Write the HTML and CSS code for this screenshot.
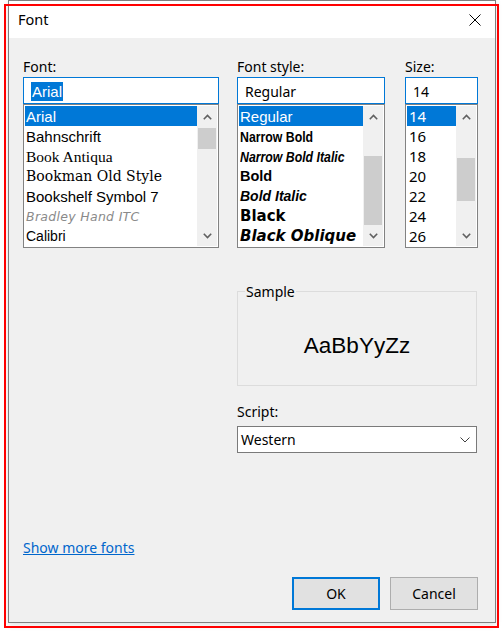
FILE: index.html
```html
<!DOCTYPE html>
<html>
<head>
<meta charset="utf-8">
<link rel="stylesheet" href="styles.css">
</head>
<body>
<div class="window">
  <div class="titlebar">
    <span class="title">Font</span>
    <svg class="close" width="12" height="12" viewBox="0 0 12 12"><path d="M0.5 0.5 L11.5 11.5 M11.5 0.5 L0.5 11.5" stroke="#000" stroke-width="1" fill="none"/></svg>
  </div>
  <div class="content">
    <div class="pickers">
      <div class="label">Font:</div>
      <div class="label">Font style:</div>
      <div class="label c3">Size:</div>

      <div class="input focused"><span class="selected-text">Arial</span></div>
      <div class="input focused"><span class="plain-text">Regular</span></div>
      <div class="input focused c3"><span class="plain-text">14</span></div>

      <div class="list">
        <div class="items">
          <div class="item sel f-arial">Arial</div>
          <div class="item f-arial">Bahnschrift</div>
          <div class="item f-antiqua">Book Antiqua</div>
          <div class="item f-bookman">Bookman Old Style</div>
          <div class="item f-arial">Bookshelf Symbol 7</div>
          <div class="item f-bradley">Bradley Hand ITC</div>
          <div class="item f-calibri">Calibri</div>
        </div>
        <div class="scrollbar">
          <div class="arrow"><svg width="9" height="6" viewBox="0 0 9 6"><path d="M0.8 5.2 L4.5 1.5 L8.2 5.2" stroke="#606060" stroke-width="1.6" fill="none"/></svg></div>
          <div class="track"><div class="thumb thumb-font"></div></div>
          <div class="arrow"><svg width="9" height="6" viewBox="0 0 9 6"><path d="M0.8 0.8 L4.5 4.5 L8.2 0.8" stroke="#606060" stroke-width="1.6" fill="none"/></svg></div>
        </div>
      </div>

      <div class="list">
        <div class="items">
          <div class="item sel f-arial">Regular</div>
          <div class="item f-narrow-b"><span class="narrow">Narrow Bold</span></div>
          <div class="item f-narrow-bi"><span class="narrow">Narrow Bold Italic</span></div>
          <div class="item f-bold">Bold</div>
          <div class="item f-bold-i">Bold Italic</div>
          <div class="item f-black">Black</div>
          <div class="item f-black-o">Black Oblique</div>
        </div>
        <div class="scrollbar">
          <div class="arrow"><svg width="9" height="6" viewBox="0 0 9 6"><path d="M0.8 5.2 L4.5 1.5 L8.2 5.2" stroke="#606060" stroke-width="1.6" fill="none"/></svg></div>
          <div class="track"><div class="thumb thumb-style"></div></div>
          <div class="arrow"><svg width="9" height="6" viewBox="0 0 9 6"><path d="M0.8 0.8 L4.5 4.5 L8.2 0.8" stroke="#606060" stroke-width="1.6" fill="none"/></svg></div>
        </div>
      </div>

      <div class="list c3">
        <div class="items">
          <div class="item sel f-ui">14</div>
          <div class="item f-ui">16</div>
          <div class="item f-ui">18</div>
          <div class="item f-ui">20</div>
          <div class="item f-ui">22</div>
          <div class="item f-ui">24</div>
          <div class="item f-ui">26</div>
        </div>
        <div class="scrollbar">
          <div class="arrow"><svg width="9" height="6" viewBox="0 0 9 6"><path d="M0.8 5.2 L4.5 1.5 L8.2 5.2" stroke="#606060" stroke-width="1.6" fill="none"/></svg></div>
          <div class="track"><div class="thumb thumb-size"></div></div>
          <div class="arrow"><svg width="9" height="6" viewBox="0 0 9 6"><path d="M0.8 0.8 L4.5 4.5 L8.2 0.8" stroke="#606060" stroke-width="1.6" fill="none"/></svg></div>
        </div>
      </div>

      <fieldset class="sample">
        <legend>Sample</legend>
        <div class="sample-text">AaBbYyZz</div>
      </fieldset>

      <div class="script-label label">Script:</div>
      <div class="select">
        <span>Western</span>
        <svg width="10" height="6" viewBox="0 0 10 6"><path d="M0.5 0.5 L5 5 L9.5 0.5" stroke="#404040" stroke-width="1" fill="none"/></svg>
      </div>
    </div>

    <div class="footer">
      <a class="more" href="#">Show more fonts</a>
      <div class="buttons">
        <button class="btn default">OK</button>
        <button class="btn">Cancel</button>
      </div>
    </div>
  </div>
</div>
<div class="redbox"></div>
</body>
</html>
```

FILE: styles.css
```css
html, body {
  margin: 0;
  padding: 0;
  background: #ffffff;
}
body {
  position: relative;
  width: 504px;
  height: 632px;
  overflow: hidden;
  font-family: "Noto Sans", "DejaVu Sans", sans-serif;
  font-size: 14px;
  color: #000;
}
.window {
  margin-left: 8px;
  width: 488px;
  height: 623px;
  box-sizing: border-box;
  border: 1px solid #7f7f7f;
  background: #f0f0f0;
  display: flex;
  flex-direction: column;
  box-shadow: 0 2px 6px rgba(0,0,0,0.12);
}
.titlebar {
  height: 37px;
  background: #ffffff;
  display: flex;
  align-items: center;
  justify-content: space-between;
  padding: 0 14px 0 9px;
  flex: none;
}
.title {
  font-size: 14.5px;
  line-height: 37px;
}
.close {
  display: block;
}
.content {
  flex: 1;
  display: flex;
  flex-direction: column;
  padding: 19px 17px 12px 14px;
}
.pickers {
  display: grid;
  grid-template-columns: 196px 148px 75px;
  column-gap: 18px;
}
.c3 {
  margin-left: 2px;
}
.label {
  line-height: 20px;
  height: 20px;
}
.input {
  height: 27px;
  box-sizing: border-box;
  background: #fff;
  border: 1px solid #7a7a7a;
  display: flex;
  align-items: center;
  padding-left: 7px;
  padding-top: 1px;
}
.input.focused {
  border-color: #0078d7;
}
.selected-text {
  background: #0078d7;
  color: #fff;
  font-family: "Liberation Sans", Arial, sans-serif;
  font-size: 15px;
  line-height: 19px;
  padding: 0 1px;
}
.list {
  height: 144px;
  box-sizing: border-box;
  border: 1px solid #828282;
  background: #fff;
  padding: 1px;
  display: flex;
}
.items {
  flex: 1;
  min-width: 0;
  overflow: hidden;
}
.item {
  height: 20px;
  line-height: 21px;
  padding-left: 1px;
  white-space: nowrap;
  color: #000;
}
.item.sel {
  background: #0078d7;
  color: #fff;
}
.narrow {
  display: inline-block;
  transform: scaleX(0.82);
  transform-origin: left center;
}
.f-arial { font-family: "Liberation Sans", Arial, sans-serif; font-size: 15px; }
.f-antiqua { font-family: "Liberation Serif", serif; font-size: 15.5px; }
.f-bookman { font-family: "DejaVu Serif", serif; font-size: 14px; }
.f-bradley { font-family: "DejaVu Sans", sans-serif; font-size: 12.5px; font-style: italic; font-weight: 200; color: #8a8a8a; letter-spacing: 0.3px; }
.f-calibri { font-family: "Liberation Sans", sans-serif; font-size: 14px; }
.f-narrow-b { font-family: "Liberation Sans", sans-serif; font-weight: 700; font-size: 15px; }
.f-narrow-bi { font-family: "Liberation Sans", sans-serif; font-weight: 700; font-style: italic; font-size: 15px; }
.f-bold { font-family: "Liberation Sans", sans-serif; font-weight: 700; font-size: 14.5px; }
.f-bold-i { font-family: "Liberation Sans", sans-serif; font-weight: 700; font-style: italic; font-size: 14px; }
.f-black { font-family: "DejaVu Sans", sans-serif; font-weight: 700; font-size: 15px; }
.f-black-o { font-family: "DejaVu Sans", sans-serif; font-weight: 700; font-style: oblique; font-size: 15px; }
.f-ui { font-family: "Noto Sans", sans-serif; font-size: 15px; padding-left: 2px; }

.scrollbar {
  width: 20px;
  flex: none;
  background: #f0f0f0;
  display: flex;
  flex-direction: column;
}
.arrow {
  height: 21px;
  display: flex;
  align-items: center;
  justify-content: center;
  flex: none;
}
.track {
  flex: 1;
}
.thumb {
  background: #cdcdcd;
  margin: 0 1px;
}
.thumb-font { margin-top: 1px; height: 21px; }
.thumb-style { margin-top: 29px; height: 69px; }
.thumb-size { margin-top: 31px; height: 43px; }

.sample {
  grid-column: 2 / 4;
  justify-self: start;
  width: 240px;
  margin: 34px 0 0 0;
  padding: 0;
  height: 104px;
  box-sizing: border-box;
  border: 1px solid #dcdcdc;
  display: flex;
  flex-direction: column;
  min-width: 0;
}
.sample legend {
  margin-left: 7px;
  padding: 0 1px;
  line-height: 19px;
}
.sample-text {
  font-family: "Liberation Sans", Arial, sans-serif;
  font-size: 22.5px;
  text-align: center;
  margin-top: 32px;
}
.script-label {
  grid-column: 2 / 4;
  margin-top: 16px;
}
.select {
  grid-column: 2 / 4;
  justify-self: start;
  width: 240px;
  margin-top: 4px;
  height: 27px;
  box-sizing: border-box;
  border: 1px solid #7a7a7a;
  background: #fff;
  display: flex;
  align-items: center;
  justify-content: space-between;
  padding: 0 6px 0 3px;
}

.footer {
  flex: 1;
  display: flex;
  flex-direction: column;
  justify-content: flex-end;
}
.more {
  color: #0066cc;
  text-decoration: underline;
  align-self: flex-start;
  line-height: 20px;
}
.buttons {
  display: flex;
  justify-content: flex-end;
  gap: 10px;
  margin-top: 19px;
}
.btn {
  width: 88px;
  height: 33px;
  box-sizing: border-box;
  background: #e1e1e1;
  border: 1px solid #adadad;
  font-family: "Noto Sans", sans-serif;
  font-size: 14px;
  color: #000;
  padding: 0;
}
.btn.default {
  border: 2px solid #0078d7;
}
.redbox {
  position: absolute;
  left: 4px;
  top: 4px;
  width: 495px;
  height: 624px;
  box-sizing: border-box;
  border: 2px solid #ff0000;
  pointer-events: none;
}
```
